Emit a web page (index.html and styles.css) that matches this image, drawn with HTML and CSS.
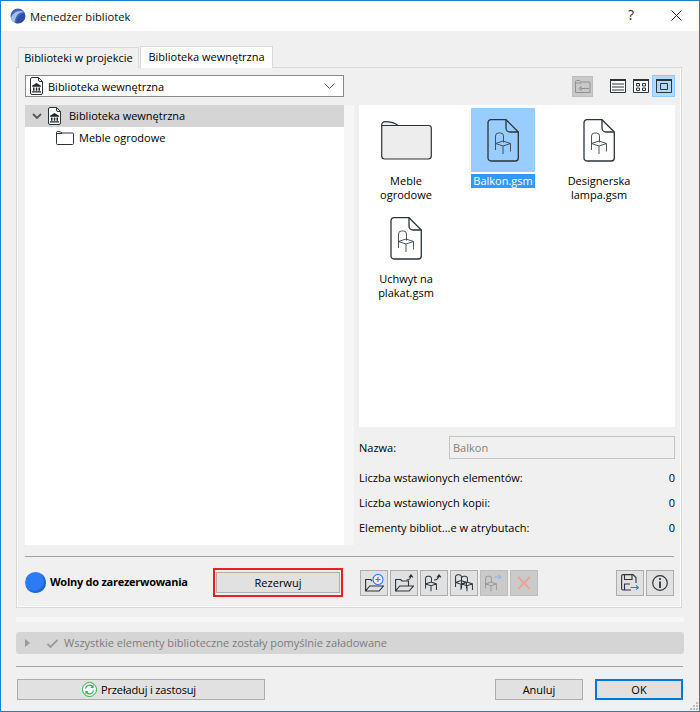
FILE: index.html
```html
<!DOCTYPE html>
<html lang="pl">
<head>
<meta charset="utf-8">
<title>Menedżer bibliotek</title>
<link rel="stylesheet" href="styles.css">
</head>
<body>
<svg class="defs" width="0" height="0" aria-hidden="true">
  <defs>
    <symbol id="gsm" viewBox="0 0 32 43">
      <path d="M4 .7H19L31.300 13V39a3 3 0 0 1-3 3H4a3 3 0 0 1-3-3V3.700a3 3 0 0 1 3-3z" fill="none" stroke="#2b343b" stroke-width="1.300"/>
      <path d="M19 .7V9a4 4 0 0 0 4 4H31.300" fill="none" stroke="#2b343b" stroke-width="1.300"/>
      <path d="M8.500 31V17a3 3 0 0 1 3-3h2a3 3 0 0 1 3 3v6.500M8.500 24.500L16 22L23.500 24.500L16 27zM23.500 24.500v8M16 27v8" fill="none" stroke="#3a434a" stroke-width=".9"/>
    </symbol>
    <symbol id="lib" viewBox="0 0 13 18">
      <path d="M2 .5H8.500L12.500 4.500V16a1.500 1.500 0 0 1-1.500 1.500H2A1.500 1.500 0 0 1 .5 16V2A1.500 1.500 0 0 1 2 .5z" fill="#fff" stroke="#2b343b"/>
      <path d="M8.500.5V3a1.500 1.500 0 0 0 1.500 1.500h2.500" fill="none" stroke="#2b343b"/>
      <path d="M2 8.800L6.500 6L11 8.800V9.800H2zM2 14.200h9v1.300H2zM3 10.500h1.500v3.200H3zM5.800 10.500h1.500v3.200H5.800zM8.500 10.500h1.500v3.200H8.500z" fill="#20282e"/>
    </symbol>
    <symbol id="folder" viewBox="0 0 51 39">
      <path d="M.7 4V35a3 3 0 0 0 3 3H47.300a3 3 0 0 0 3-3V7a2.500 2.500 0 0 0-2.500-2.500H17C13 1 9 .7 4 .7A3.300 3.300 0 0 0 .7 4z" fill="#ededed" stroke="#2b343b" stroke-width="1.200"/>
      <path d="M.7 4.500H17" fill="none" stroke="#2b343b" stroke-width="1"/>
    </symbol>
    <symbol id="folder-small" viewBox="0 0 18 14">
      <path d="M.5 1.500V12.500a1 1 0 0 0 1 1H16.500a1 1 0 0 0 1-1V3a1 1 0 0 0-1-1H6C5 1 3.500.5 1.500.5a1 1 0 0 0-1 1z" fill="#fff" stroke="#2b343b"/>
      <path d="M.5 2.500H6" fill="none" stroke="#2b343b"/>
    </symbol>
    <symbol id="mini-chair" viewBox="0 0 13 17">
      <path d="M.6 14V3A2.400 2.400 0 0 1 3 .6h1.500A2.400 2.400 0 0 1 7 3V7M.6 9L6.500 7L12.400 9L6.500 11zM12.400 9v6.500M6.500 11v6" fill="none" stroke="currentColor" stroke-width="1.100"/>
    </symbol>
  </defs>
</svg>

<div class="window">
  <header class="titlebar">
    <svg class="app-logo" width="16" height="16" viewBox="0 0 16 16"><circle cx="8" cy="8" r="7.500" fill="#3a68b8"/><path d="M1 10C3 4 9 1 14.500 4.500C10 3.500 6 6 4.500 14.500C2.500 13.500 1.500 12 1 10z" fill="#a9c1e8"/><path d="M6 15.300C6.500 9.500 9.500 6 14.800 5.500C15.500 8 15 11 13 13C11.500 14.500 9 15.500 6 15.300z" fill="#2a4f9c"/></svg>
    <span class="title">Menedżer bibliotek</span>
    <span class="help">?</span>
    <svg class="close" width="11" height="11" viewBox="0 0 11 11"><path d="M.5.5L10.500 10.500M10.500.5L.5 10.500" stroke="#222" stroke-width="1" fill="none"/></svg>
  </header>

  <main class="content">
    <nav class="tabs">
      <span class="tab">Biblioteki w projekcie</span>
      <span class="tab tab-active">Biblioteka wewnętrzna</span>
    </nav>

    <section class="panel">
      <div class="top-row">
        <div class="dropdown">
          <svg class="lib-icon" width="13" height="18"><use href="#lib"/></svg>
          <span class="dropdown-text">Biblioteka wewnętrzna</span>
          <svg class="dropdown-arrow" width="11" height="6" viewBox="0 0 11 6"><path d="M.5.5L5.500 5.500L10.500.5" fill="none" stroke="#555" stroke-width="1"/></svg>
        </div>
        <div class="view-tools">
          <span class="up-btn">
            <svg width="16" height="13" viewBox="0 0 16 13"><path d="M.5 12.500V1.500a1 1 0 0 1 1-1h3l1.500 1.500h9v10.500z" fill="none" stroke="#909090"/><path d="M.5 3h6M4 8.500L6 6.500V10.500zM6 8.500h8" fill="none" stroke="#909090"/></svg>
          </span>
          <span class="view-btn">
            <svg width="16" height="14" viewBox="0 0 16 14"><path d="M.5.5h15v13H.5z" fill="#fff" stroke="#2b343b"/><path d="M0 1h16" stroke="#2b343b" stroke-width="2"/><path d="M2 5h12M2 8h12M2 11h12" stroke="#2b343b"/></svg>
          </span>
          <span class="view-btn">
            <svg width="16" height="14" viewBox="0 0 16 14"><path d="M.5.5h15v13H.5z" fill="#fff" stroke="#2b343b"/><path d="M0 1h16" stroke="#2b343b" stroke-width="2"/><path d="M3.500 4.500h3v2.500h-3zM9.500 4.500h3v2.500h-3zM3.500 9h3v2.500h-3zM9.500 9h3v2.500h-3z" fill="none" stroke="#2b343b"/></svg>
          </span>
          <span class="view-btn view-btn-on">
            <svg width="16" height="14" viewBox="0 0 16 14"><path d="M.5.5h15v13H.5z" fill="none" stroke="#2b343b"/><path d="M0 1h16" stroke="#2b343b" stroke-width="2"/><path d="M4.500 4.500h7v6h-7z" fill="none" stroke="#2b343b"/></svg>
          </span>
        </div>
      </div>

      <div class="columns">
        <div class="tree">
          <div class="tree-row tree-row-on">
            <svg class="tree-chevron" width="10" height="6" viewBox="0 0 10 6"><path d="M1 1L5 5L9 1" fill="none" stroke="#555" stroke-width="1.800"/></svg>
            <svg class="tree-lib" width="13" height="18"><use href="#lib"/></svg>
            <span class="lift">Biblioteka wewnętrzna</span>
          </div>
          <div class="tree-row tree-row-sub">
            <svg class="tree-folder" width="18" height="14"><use href="#folder-small"/></svg>
            <span class="lift">Meble ogrodowe</span>
          </div>
        </div>

        <div class="splitter"></div>

        <div class="detail">
          <div class="files">
            <figure class="file">
              <div class="tile"><svg width="51" height="39"><use href="#folder"/></svg></div>
              <figcaption class="file-name">Meble<br>ogrodowe</figcaption>
            </figure>
            <figure class="file file-on">
              <div class="tile"><svg width="32" height="43"><use href="#gsm"/></svg></div>
              <figcaption class="file-name"><span class="name-sel">Balkon.gsm</span></figcaption>
            </figure>
            <figure class="file">
              <div class="tile"><svg width="32" height="43"><use href="#gsm"/></svg></div>
              <figcaption class="file-name">Designerska<br>lampa.gsm</figcaption>
            </figure>
            <figure class="file">
              <div class="tile"><svg width="32" height="43"><use href="#gsm"/></svg></div>
              <figcaption class="file-name">Uchwyt na<br>plakat.gsm</figcaption>
            </figure>
          </div>

          <div class="name-row">
            <span class="name-label">Nazwa:</span>
            <span class="name-input">Balkon</span>
          </div>
          <div class="stat"><span>Liczba wstawionych elementów:</span><span>0</span></div>
          <div class="stat"><span>Liczba wstawionych kopii:</span><span>0</span></div>
          <div class="stat"><span>Elementy bibliot...e w atrybutach:</span><span>0</span></div>
        </div>
      </div>

      <div class="rule"></div>

      <div class="actions">
        <span class="dot"></span>
        <span class="status-text lift">Wolny do zarezerwowania</span>
        <span class="reserve-outline"><span class="btn reserve">Rezerwuj</span></span>

        <div class="icon-group">
          <span class="icon-btn">
            <svg width="19" height="18" viewBox="0 0 19 18"><path d="M.6 17V5.500h5l1.500 1.500M.6 17h13.500l4.300-5H4.800z" fill="none" stroke="#2b343b" stroke-width="1.100"/><circle cx="13" cy="5.500" r="5" fill="#eaf2ff" stroke="#2a7cf0" stroke-width="1.100"/><path d="M10.500 5.500h5M13 3v5" stroke="#2a7cf0" stroke-width="1.100"/></svg>
          </span>
          <span class="icon-btn">
            <svg width="19" height="18" viewBox="0 0 19 18"><path d="M.6 17V5.500h5L7 7h6.500v5M.6 17h13.500l4.300-5H4.800z" fill="none" stroke="#2b343b" stroke-width="1.100"/><path d="M11.500 6C14.500 6 15.500 5 16 1.500M14 3.500L16 .8L18 3.500" fill="none" stroke="#2b343b" stroke-width="1.100"/></svg>
          </span>
          <span class="icon-btn">
            <svg class="chair-line" width="18" height="18" viewBox="0 0 18 18"><use href="#mini-chair" x="0" y="1" width="12" height="17"/><path d="M9 6C12 6 13.500 5 14 1.500M12 3.500L14 .8L16 3.500" fill="none" stroke="#2b343b" stroke-width="1.100"/></svg>
          </span>
          <span class="icon-btn">
            <svg class="chair-line" width="18" height="18" viewBox="0 0 18 18"><use href="#mini-chair" x="0" y="0" width="12" height="16"/><use href="#mini-chair" x="6" y="1" width="12" height="17"/></svg>
          </span>
          <span class="icon-btn icon-btn-off">
            <svg class="chair-off" width="18" height="18" viewBox="0 0 18 18"><use href="#mini-chair" x="0" y="1" width="12" height="17"/><path d="M9 3h7M13.500 .8L16 3L13.500 5.200" fill="none" stroke="#8ab8ef" stroke-width="1.100"/></svg>
          </span>
          <span class="icon-btn icon-btn-off">
            <svg width="14" height="14" viewBox="0 0 14 14"><path d="M1 1L13 13M13 1L1 13" stroke="#e8a595" stroke-width="1.800"/></svg>
          </span>
        </div>

        <div class="icon-group icon-group-end">
          <span class="icon-btn">
            <svg width="18" height="17" viewBox="0 0 18 17"><path d="M10 16H2A1.500 1.500 0 0 1 .6 14.500V2A1.500 1.500 0 0 1 2 .6H12L15 3.500V9" fill="none" stroke="#2b343b" stroke-width="1.100"/><path d="M3.500.6V5.500h7.500V.6M3.500 16V10H9" fill="none" stroke="#2b343b" stroke-width="1.100"/><path d="M9.500 13.500h8M15 11.300L17.500 13.500L15 15.700" fill="none" stroke="#2a7cf0" stroke-width="1.100"/></svg>
          </span>
          <span class="icon-btn">
            <svg width="16" height="16" viewBox="0 0 16 16"><circle cx="8" cy="8" r="7.300" fill="none" stroke="#2b343b" stroke-width="1.200"/><path d="M8 6.500v6.500" stroke="#2b343b" stroke-width="1.800"/><circle cx="8" cy="4" r="1.100" fill="#2b343b"/></svg>
          </span>
        </div>
      </div>
    </section>

    <div class="strip"></div>

    <div class="message">
      <svg class="msg-arrow" width="5" height="8" viewBox="0 0 5 8"><path d="M0 0L5 4L0 8z" fill="#9a9a9a"/></svg>
      <svg class="msg-check" width="11" height="9" viewBox="0 0 11 9"><path d="M.5 5L3.500 8L10.500 1" fill="none" stroke="#9a9a9a" stroke-width="1.800"/></svg>
      <span class="lift">Wszystkie elementy biblioteczne zostały pomyślnie załadowane</span>
    </div>

    <div class="rule rule-bottom"></div>

    <footer class="footer">
      <span class="btn reload">
        <svg width="15" height="15" viewBox="0 0 15 15"><circle cx="7.500" cy="7.500" r="7" fill="#fff" stroke="#2eab45"/><path d="M3.500 6.500A4 4 0 0 1 10.500 4.500M11.500 8.500A4 4 0 0 1 4.500 10.500" fill="none" stroke="#2eab45" stroke-width="1.200"/><path d="M11.500 2.500V6H8.500zM3.500 12.500V9H6.500z" fill="#2eab45"/></svg>
        <span class="reload-text">Przeładuj i zastosuj</span>
      </span>
      <span class="btn cancel">Anuluj</span>
      <span class="btn ok">OK</span>
    </footer>
    <svg class="grip" width="9" height="9" viewBox="0 0 9 9"><path d="M6 0h2v2H6zM3 3h2v2H3zM6 3h2v2H6zM0 6h2v2H0zM3 6h2v2H3zM6 6h2v2H6z" fill="#bcbcbc"/></svg>
  </main>
</div>
</body>
</html>
```
FILE: styles.css
```css
* { box-sizing: border-box; }
html, body { margin: 0; padding: 0; }
body {
  width: 700px;
  height: 712px;
  overflow: hidden;
  font-family: "Open Sans", "Liberation Sans", sans-serif;
  font-size: 11px;
  color: #000;
}
.defs { position: absolute; }
svg { display: block; flex: none; }
.lift { padding-bottom: 2px; }

.window {
  width: 700px;
  height: 712px;
  border: 1px solid #1a7fd0;
  display: flex;
  flex-direction: column;
  background: #f0f0f0;
}

.titlebar {
  height: 30px;
  background: #fff;
  display: flex;
  align-items: center;
  padding: 0 17px 0 9px;
  flex: none;
}
.app-logo { margin-right: 4px; }
.title { font-size: 11.2px; color: #111; }
.help { margin-left: auto; margin-right: 37px; padding-bottom: 4px; font-size: 14px; color: #222; }
.close { margin-bottom: 2px; }

.content {
  flex: 1;
  padding: 15px 15px 0;
  position: relative;
}

.tabs {
  display: flex;
  align-items: flex-end;
  height: 22px;
  margin-bottom: -1px;
  padding-left: 2px;
  position: relative;
  z-index: 1;
}
.tab {
  height: 21px;
  width: 121px;
  line-height: 20px;
  text-align: center;
  border: 1px solid #d9d9d9;
  border-bottom: 0;
  background: #f0f0f0;
}
.tab-active {
  height: 22px;
  width: 133px;
  background: #fff;
  margin-left: 1px;
}

.panel {
  width: 666px;
  height: 541px;
  border: 1px solid #d9d9d9;
  box-shadow: inset 0 -1px 0 #fff, inset 1px 0 0 #fff, inset -1px 0 0 #fff;
  padding: 7px 6px 0 8px;
  background: #f0f0f0;
}

.top-row { display: flex; height: 22px; }
.dropdown {
  width: 319px;
  height: 22px;
  background: #fff;
  border: 1px solid #8a8a8a;
  display: flex;
  align-items: center;
  padding: 0 8px 0 4px;
}
.lib-icon { margin-right: 5px; }
.dropdown-arrow { margin-left: auto; }

.view-tools { margin-left: auto; display: flex; align-items: center; }
.up-btn {
  width: 21px;
  height: 21px;
  margin-right: 13px;
  background: #c9c9c9;
  border: 1px solid #bdbdbd;
  display: flex;
  align-items: center;
  justify-content: center;
}
.view-btn {
  width: 23px;
  height: 22px;
  display: flex;
  align-items: center;
  justify-content: center;
  border: 1px solid transparent;
}
.view-btn-on { background: #b5d8f8; border-color: #8fc7f7; }

.columns { display: flex; margin-top: 8px; height: 440px; }
.tree { width: 319px; background: #fff; flex: none; }
.tree-row { height: 22px; display: flex; align-items: center; }
.tree-row-on { background: #d5d5d5; padding-left: 7px; }
.tree-chevron { margin-right: 6px; }
.tree-lib { margin-right: 8px; }
.tree-row-sub { padding-left: 31px; }
.tree-folder { margin-right: 5px; }

.splitter { width: 10px; background: #f6f6f6; flex: none; }
.detail { margin-left: 5px; width: 316px; }

.files {
  height: 322px;
  background: #fff;
  display: grid;
  grid-template-columns: 94px 100px 92px;
  grid-auto-rows: 98px;
}
.file { margin: 0; padding-top: 3px; display: flex; flex-direction: column; align-items: center; }
.tile { width: 64px; height: 64px; display: flex; align-items: center; justify-content: center; }
.file-on .tile { background: #99ccff; }
.file-name { margin-top: 2px; line-height: 14px; text-align: center; white-space: nowrap; }
.name-sel { display: block; width: 64px; background: #3399ff; color: #fff; }

.name-row { display: flex; align-items: center; margin-top: 9px; height: 23px; }
.name-label { width: 90px; }
.name-input {
  flex: 1;
  height: 23px;
  line-height: 21px;
  border: 1px solid #c4c4c4;
  padding-left: 3px;
  color: #808080;
}
.stat {
  height: 25px;
  padding-bottom: 2px;
  display: flex;
  align-items: center;
  justify-content: space-between;
}
.name-row + .stat { margin-top: 7px; }

.rule { height: 1px; background: #a3a3a3; margin: 11px 1px 0 0; }

.actions { display: flex; align-items: center; height: 29px; margin-top: 11px; padding-right: 1px; }
.dot {
  width: 21px;
  height: 21px;
  border-radius: 50%;
  background: #2a7cf5;
  box-shadow: inset -2px -2px 0 #2467cc;
  flex: none;
}
.status-text { font-weight: 700; letter-spacing: -.26px; margin-left: 4px; width: 163px; }
.reserve-outline {
  width: 130px;
  height: 29px;
  border: 1px solid #ee1c25;
  padding: 3px 2px;
  box-shadow: inset 0 0 0 1px #ee1c25;
  display: flex;
}
.btn {
  background: #e1e1e1;
  border: 1px solid #adadad;
  display: flex;
  align-items: center;
  justify-content: center;
  height: 21px;
}
.reserve { flex: 1; }

.icon-group { display: flex; gap: 2px; margin-left: 17px; }
.icon-group-end { margin-left: auto; }
.icon-btn {
  width: 28px;
  height: 26px;
  background: #e1e1e1;
  border: 1px solid #adadad;
  display: flex;
  align-items: center;
  justify-content: center;
}
.icon-btn-off { background: #cacaca; border-color: #bdbdbd; }
.chair-line { color: #2b343b; }
.chair-off { color: #9a9a9a; }

.strip { width: 668px; height: 5px; margin-top: 9px; background: #f6f6f6; }

.message {
  width: 668px;
  height: 22px;
  margin-top: 10px;
  background: #d5d5d5;
  border-radius: 3px;
  display: flex;
  align-items: center;
  padding-left: 9px;
  color: #7c7c7c;
}
.msg-arrow { margin-right: 17px; }
.msg-check { margin-right: 6px; }

.rule-bottom { width: 667px; margin: 12px 0 0; }

.footer { display: flex; margin-top: 12px; padding: 0 1px; }
.reload { width: 248px; gap: 4px; padding-right: 4px; }
.reload-text { letter-spacing: -.15px; }
.cancel { width: 88px; margin-left: auto; margin-right: 12px; }
.ok { width: 88px; border: 2px solid #0078d7; }

.grip { position: absolute; right: 0; bottom: 0; }
```
